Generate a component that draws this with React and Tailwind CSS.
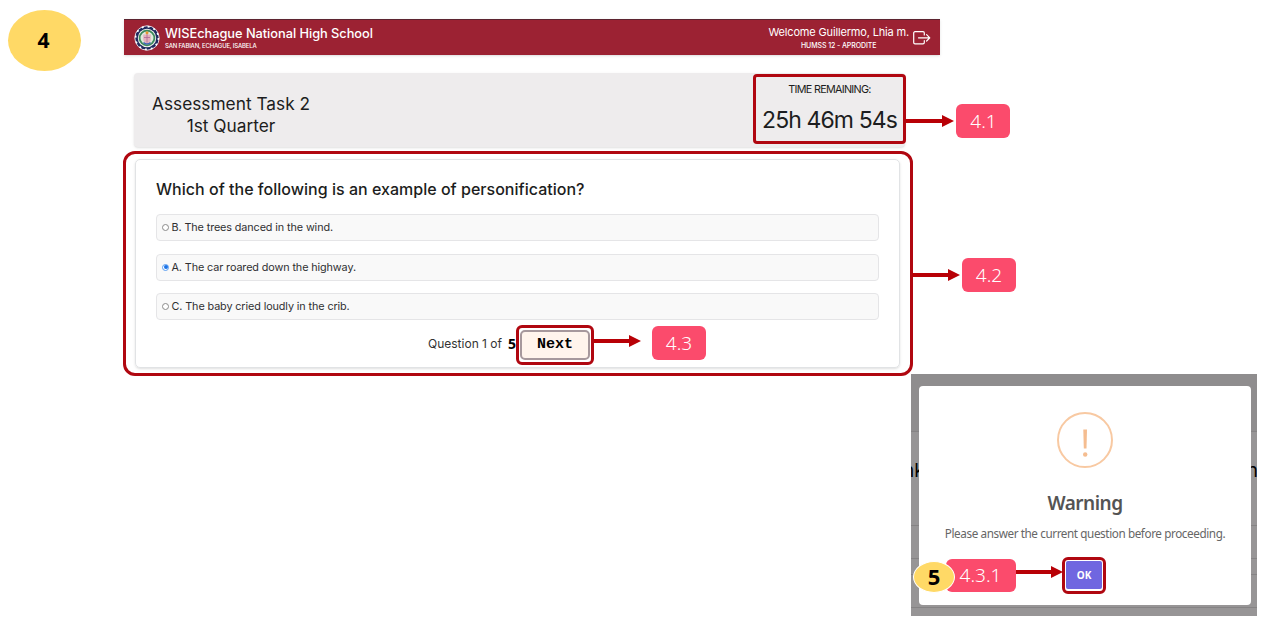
import React from "react";

const UI = "font-['Inter',sans-serif]";

function Seal() {
  return (
    <svg width="26" height="26" viewBox="0 0 26 26" className="shrink-0">
      <circle cx="13" cy="13" r="12.2" fill="#1d2a5e" stroke="#e9d3dc" strokeWidth="1" />
      <circle cx="13" cy="13" r="11.4" fill="none" stroke="#fff" strokeWidth="1.600" strokeDasharray="2 4" />
      <circle cx="13" cy="13" r="9.2" fill="#f4f1ee" />
      <circle cx="13" cy="13" r="7.4" fill="#dfeadd" stroke="#3c8a5c" strokeWidth="1.8" />
      <path d="M9.200 9.500h7.600v4.500c0 2.400-1.700 4-3.800 5-2.100-1-3.800-2.600-3.800-5z" fill="#e3b0bd" />
      <path d="M13 8.500v9M10 12.500h6" stroke="#b06a96" strokeWidth="0.8" />
      <circle cx="13" cy="7.800" r="1.500" fill="#e5942f" />
      <path d="M9.500 17.500c2 2 5 2 7 0" fill="none" stroke="#3d62b5" strokeWidth="1.400" />
    </svg>
  );
}

function LogoutIcon() {
  return (
    <svg width="18" height="14" viewBox="0 0 18 14" fill="none" stroke="#fff" strokeWidth="1.200" strokeLinecap="round" strokeLinejoin="round">
      <path d="M11.300 4V2a1.300 1.300 0 0 0-1.300-1.300H2A1.300 1.300 0 0 0 .7 2v9.500A1.300 1.300 0 0 0 2 12.800h8a1.300 1.300 0 0 0 1.300-1.300v-2" />
      <path d="M5.500 6.800h11.200M13.600 3.600l3.200 3.200-3.200 3.200" />
    </svg>
  );
}

function Arrow({ width, className }) {
  return (
    <svg width={width} height="12" viewBox={`0 0 ${width} 12`} className={`absolute ${className}`}>
      <path d={`M0 6H${width - 9}`} stroke="#b80006" strokeWidth="4" />
      <path d={`M${width - 12} 0L${width} 6L${width - 12} 12Z`} fill="#b80006" />
    </svg>
  );
}

function Tag({ children, className }) {
  return (
    <div className={`absolute flex items-center justify-center rounded-[6px] bg-[#fb4b6c] font-['Noto_Sans',sans-serif] text-[19px] font-light text-white ${className}`}>
      {children}
    </div>
  );
}

function Option({ label, checked }) {
  return (
    <div className="flex h-[27px] items-center rounded-[4px] border border-[#e5e5e7] bg-[#f9f9f9] pl-[5px]">
      <span className={`flex size-[7px] items-center justify-center rounded-full border bg-white ${checked ? "border-[#5a9df0]" : "border-[#8a8a8a]"}`}>
        {checked && <span className="size-[4px] shrink-0 rounded-full bg-[#1a73e8]" />}
      </span>
      <span className="ml-[2.500px] pt-px text-[10.800px] tracking-[-0.100px] whitespace-nowrap text-[#2f2f31]">{label}</span>
    </div>
  );
}

export default function App() {
  return (
    <div className={`relative h-[644px] w-[1280px] overflow-hidden bg-white ${UI}`}>
      <main className="ml-[124px] w-[816px] pt-[19px]">
        <header className="flex h-[36px] items-center justify-between border-t border-[#5c2430] bg-[#9c2233] pr-[9px] pl-[10px] text-white shadow-sm">
          <div className="flex items-center gap-[5px]">
            <Seal />
            <div className="whitespace-nowrap">
              <div className="text-[12.800px] leading-[15px] font-medium tracking-[-0.030px]">WISEchague National High School</div>
              <div className="text-[6px] leading-[9px] font-medium tracking-[-0.180px]">SAN FABIAN, ECHAGUE, ISABELA</div>
            </div>
          </div>
          <div className="flex items-center gap-[4px]">
            <div className="text-center whitespace-nowrap">
              <div className="text-[11px] leading-[15px] tracking-[-0.160px]">Welcome Guillermo, Lhia m.</div>
              <div className="text-[7px] leading-[11px] font-medium tracking-[-0.080px]">HUMSS 12 - APRODITE</div>
            </div>
            <LogoutIcon />
          </div>
        </header>

        <section className="mt-[18px] ml-[10px] flex h-[74px] w-[771px] items-start justify-between rounded-[4px] bg-[#eeeced] shadow-sm">
          <div className="ml-[18px] pt-[20px] text-center text-[17.300px] leading-[22px] whitespace-nowrap text-[#1c1d20]">
            <div>Assessment Task 2</div>
            <div>1st Quarter</div>
          </div>
          <div className="mt-px -mr-px flex h-[70px] w-[153px] flex-col items-center rounded-[4px] border-[3px] border-[#b00710] whitespace-nowrap text-[#1c1d20]">
            <div className="mt-[6px] text-[10.800px] leading-[14px] tracking-[-0.700px]">TIME REMAINING:</div>
            <div className="mt-[9px] text-[23px] leading-[28px] tracking-[-0.900px]">25h 46m 54s</div>
          </div>
        </section>

        <section className="mt-[4px] -ml-px flex h-[225px] w-[790px] rounded-[12px] border-[3px] border-[#b00710] pt-[5px] pl-[9px]">
          <div className="flex h-[209px] w-[765px] flex-col rounded-[5px] border border-[#e1e3e5] px-[20px] shadow-sm">
            <h1 className="mt-[18px] text-[16px] leading-[22px] font-medium tracking-[0.020px] whitespace-nowrap text-[#1c1d20]">
              Which of the following is an example of personification?
            </h1>
            <div className="mt-[14px] flex flex-col gap-[12.700px]">
              <Option label="B. The trees danced in the wind." />
              <Option label="A. The car roared down the highway." checked />
              <Option label="C. The baby cried loudly in the crib." />
            </div>
            <div className="mt-[4.500px] ml-[272px] flex items-center whitespace-nowrap">
              <span className="-mt-px w-[80px] text-[12px] text-[#333]">Question 1 of</span>
              <span className="-mt-[2px] w-[8px] font-['Noto_Sans',sans-serif] text-[14px] leading-[20px] font-bold text-black">5</span>
              <div className="flex h-[40px] w-[78px] items-center justify-center rounded-[6px] border-[3px] border-[#b00710] bg-white">
                <button className="flex h-[30px] w-[70px] items-center justify-center rounded-[5px] border-2 border-[#a6989c] bg-[#fff4ec] font-['Courier_New','Liberation_Mono',monospace] text-[15px] font-bold text-black">
                  Next
                </button>
              </div>
            </div>
          </div>
        </section>
      </main>

      <div className="absolute top-[10px] left-[8px] flex h-[61px] w-[73px] items-center justify-center rounded-[50%] bg-[#ffd966] pr-[2px] font-['Noto_Sans',sans-serif] text-[21px] font-bold text-black">
        4
      </div>

      <Arrow width={48} className="top-[115px] left-[906px]" />
      <Tag className="top-[104px] left-[956px] h-[34px] w-[54px] pl-px">4.1</Tag>
      <Arrow width={48} className="top-[269px] left-[912px]" />
      <Tag className="top-[258px] left-[962px] h-[34px] w-[54px]">4.2</Tag>
      <Arrow width={47} className="top-[335px] left-[594px]" />
      <Tag className="top-[326px] left-[652px] h-[34px] w-[54px]">4.3</Tag>

      <div className="absolute top-[374px] left-[911px] h-[242px] w-[346px] overflow-hidden bg-[#979596]">
        <div className="h-[58px] border-b border-[#858384] bg-[#8f8d8e]" />
        <div className="flex h-[94px] items-center justify-between border-b border-[#858384] text-[19px] text-black">
          <span className="-mt-[14px] -ml-[8px]">nk</span>
          <span className="-mt-[14px] -mr-px">n</span>
        </div>
        <div className="h-[33px] border-b border-[#858384]" />
        <div className="h-[16px] border-b border-[#858384]" />
        <div className="h-[33px] border-b border-[#858384]" />
        <div className="absolute top-[12px] left-[8px] flex h-[219px] w-[332px] flex-col items-center rounded-[4px] bg-white pt-[26px] font-['Noto_Sans',sans-serif]">
          <svg width="56" height="56" viewBox="0 0 56 56">
            <circle cx="28" cy="28" r="27" fill="none" stroke="#f8c9a2" strokeWidth="2" />
            <path d="M26.300 17.500h3.700l-.5 19h-2.700z" fill="#f5bd90" />
            <circle cx="28.200" cy="42.500" r="2.200" fill="#f5bd90" />
          </svg>
          <div className="mt-[22px] text-[19px] leading-[26px] font-semibold tracking-[-0.500px] text-[#545454]">Warning</div>
          <div className="mt-[9px] text-[11.700px] leading-[17px] tracking-[-0.400px] whitespace-nowrap text-[#666]">
            Please answer the current question before proceeding.
          </div>
          <div className="mt-[15px] mr-[2px] flex h-[37px] w-[44px] items-start justify-center rounded-[6px] border-[3px] border-[#b00710] bg-white">
            <button className="mt-px flex h-[28px] w-[36px] items-center justify-center rounded-[2px] bg-[#7066e0] text-[10px] font-bold text-white">OK</button>
          </div>
        </div>
      </div>

      <Arrow width={48} className="top-[566px] left-[1015px]" />
      <Tag className="top-[559px] left-[946px] h-[33px] w-[70px] pr-px">4.3.1</Tag>
      <div className="absolute top-[561px] left-[913px] flex h-[32px] w-[42px] items-center justify-center rounded-[50%] border border-white bg-[#ffd966] pb-[2px] font-['Noto_Sans',sans-serif] text-[22px] font-bold text-black">
        5
      </div>
    </div>
  );
}
